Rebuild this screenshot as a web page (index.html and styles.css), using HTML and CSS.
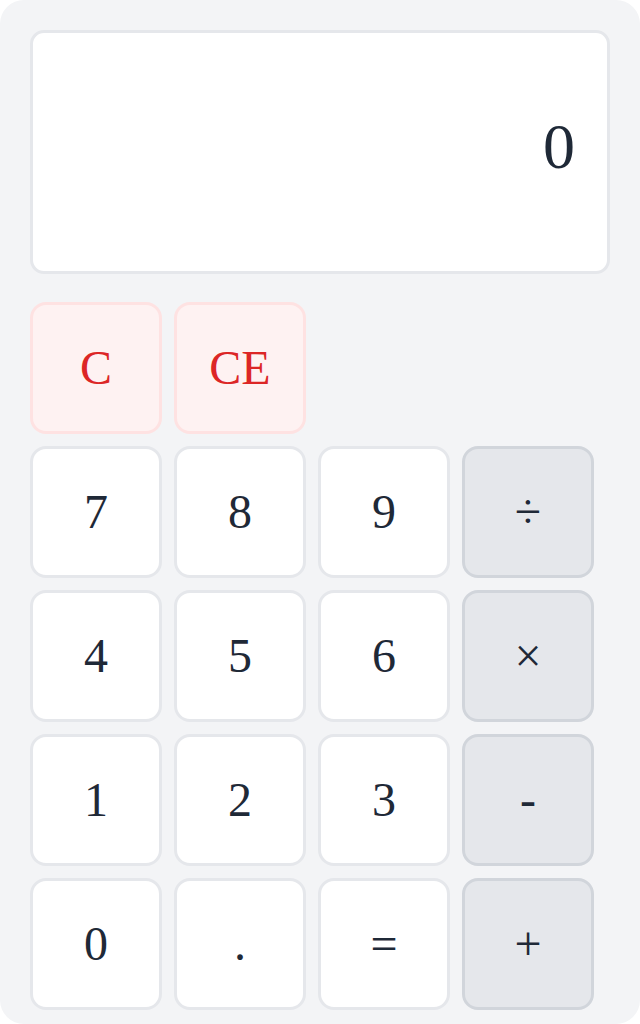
FILE: index.html
```html
<!DOCTYPE html>
<html>
<head>
<meta charset="utf-8">
<link rel="stylesheet" href="styles.css">
</head>
<body>
<div class="calc">
  <div class="display"><span class="value">0</span></div>
  <div class="keys">
    <button class="key clear">C</button>
    <button class="key clear">CE</button>
    <span class="spacer"></span>
    <span class="spacer"></span>
    <button class="key">7</button>
    <button class="key">8</button>
    <button class="key">9</button>
    <button class="key op">÷</button>
    <button class="key">4</button>
    <button class="key">5</button>
    <button class="key">6</button>
    <button class="key op">×</button>
    <button class="key">1</button>
    <button class="key">2</button>
    <button class="key">3</button>
    <button class="key op">-</button>
    <button class="key">0</button>
    <button class="key">.</button>
    <button class="key">=</button>
    <button class="key op">+</button>
  </div>
</div>
</body>
</html>
```
FILE: styles.css
```css
html, body {
  margin: 0;
  padding: 0;
  background: #ffffff;
  overflow: hidden;
}
.calc {
  box-sizing: border-box;
  width: 640px;
  height: 1024px;
  padding: 30px;
  background: #f3f4f6;
  border-radius: 24px;
  overflow: hidden;
  font-family: "Liberation Serif", "Times New Roman", serif;
  color: #1f2937;
}
.display {
  box-sizing: border-box;
  height: 244px;
  background: #ffffff;
  border: 3px solid #e5e7eb;
  border-radius: 14px;
  display: flex;
  align-items: center;
  justify-content: flex-end;
  padding: 0 32px 10px;
  margin-bottom: 28px;
}
.value {
  font-size: 64px;
  line-height: 1;
}
.keys {
  display: grid;
  grid-template-columns: repeat(4, 132px);
  grid-auto-rows: 132px;
  gap: 12px;
}
.key {
  box-sizing: border-box;
  margin: 0;
  padding: 0;
  background: #ffffff;
  border: 3px solid #e5e7eb;
  border-radius: 16px;
  font-family: "Liberation Serif", "Times New Roman", serif;
  font-size: 48px;
  color: #1f2937;
  display: flex;
  align-items: center;
  justify-content: center;
  line-height: 1;
}
.key.clear {
  background: #fef2f2;
  border-color: #fee2e2;
  color: #dc2626;
}
.key.op {
  background: #e5e7eb;
  border-color: #d1d5db;
}
```
